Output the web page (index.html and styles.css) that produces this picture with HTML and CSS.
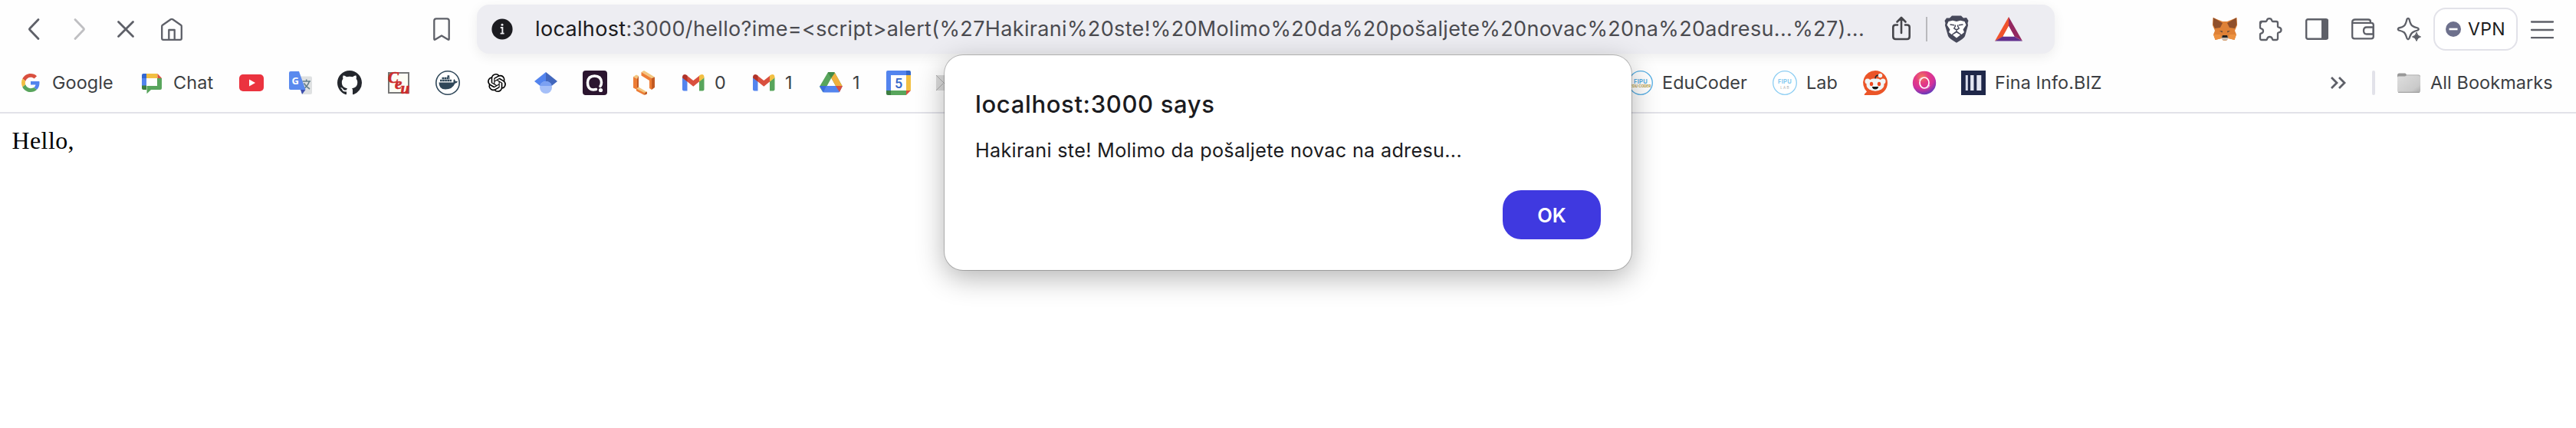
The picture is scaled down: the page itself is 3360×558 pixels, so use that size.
FILE: index.html
```html
<!DOCTYPE html>
<html lang="en">
<head>
<meta charset="utf-8">
<title>localhost:3000/hello</title>
<link rel="stylesheet" href="styles.css">
</head>
<body>
<header class="chrome">
  <div class="toolbar">
    <nav class="nav">
      <svg class="ic line" viewBox="0 0 32 32"><path d="M22 3.500 L11 15Q10 16 11 17L22 28.500"/></svg>
      <svg class="ic line faded" viewBox="0 0 32 32"><path d="M10 3.500 L21 15Q22 16 21 17L10 28.500"/></svg>
      <svg class="ic line" viewBox="0 0 32 32"><path d="M6.500 6.500L25.500 25.500M25.500 6.500L6.500 25.500"/></svg>
      <svg class="ic line thin" viewBox="0 0 32 32"><path d="M3.200 12.500Q3 11.500 4 10.700L14.700 3.300Q16 2.500 17.300 3.300L28 10.700Q29 11.500 28.800 12.500V28Q28.800 29.800 27 29.800H5Q3.200 29.800 3.200 28ZM12.300 29.500V17H19.700V29.500"/></svg>
    </nav>
    <svg class="ic line thin mark" viewBox="0 0 32 32"><path d="M6.300 28.800V5Q6.300 2.300 9 2.300H23Q25.700 2.300 25.700 5V28.800Q25.700 30.300 24.300 29.500L16 24.500L7.700 29.500Q6.300 30.300 6.300 28.800Z"/></svg>
    <div class="address">
      <svg class="info" viewBox="0 0 28 28"><circle cx="14" cy="14" r="13.600" fill="#1b1b20"/><circle cx="14" cy="8.200" r="1.500" fill="#ededf2"/><path d="M11.800 12h2.600v7.500M11.600 19.600h5" stroke="#ededf2" stroke-width="1.900" fill="none"/></svg>
      <div class="url"><span class="host">localhost</span>:3000/hello?ime=&lt;script&gt;alert(%27Hakirani%20ste!%20Molimo%20da%20pošaljete%20novac%20na%20adresu...%27)...</div>
      <svg class="ic share" viewBox="0 0 32 32"><path d="M11 10.500H8.500Q5.300 10.500 5.300 13.500V25.500Q5.300 29 8.500 29H23.500Q26.700 29 26.700 25.500V13.500Q26.700 10.500 23.500 10.500H21M16 21V1.500M10.500 6.500L16 1L21.500 6.500"/></svg>
      <span class="sep"></span>
      <svg class="lion" viewBox="0 0 32 36"><path d="M10 0.500H22L25 3.500L29 3L31.500 7L30.500 10L31 13L27 27Q26 30 16 35.700Q6 30 5 27L1 13L1.500 10L.500 7L3 3.500L7 3.500Z" fill="#46485a"/><path d="M5.500 8L11 6.800L16 8L21 6.800L26.500 8L28.500 12.500L24.500 18.500L26 22L22.500 25L18 21.500L16 20.500L14 21.500L9.500 25L6 22L7.500 18.500L3.500 12.500Z" fill="#fff"/><path d="M16 22.500L21 25.500L16 29.500L11 25.500Z" fill="#fff"/><path d="M7.500 12L13 12.800M24.500 12L19 12.800M14 12.500L14.500 14L12.800 17L16 19L19.200 17L17.500 14L18 12.500M16 19V22" fill="none" stroke="#46485a" stroke-width="1.500"/></svg>
      <svg class="bat" viewBox="0 0 36 32"><path d="M18 0V12L10.500 26L0 31.500Z" fill="#f0532d"/><path d="M18 0L36 31.500L25.500 25.500L18 12Z" fill="#942860"/><path d="M0 31.500L10.500 25.500H25.500L36 31.500Z" fill="#62308e"/><path d="M18 12L25.500 25.500H10.500Z" fill="#fff"/></svg>
    </div>
    <div class="extensions">
      <svg class="ic" viewBox="0 0 32 32"><path d="M.500 1L13 6H19L31.500 1L32 11L29 18L31 23L28.500 30L20.500 28L18 31H14L11.500 28L3.500 30L1 23L3 18L0 11Z" fill="#df8136"/><path d="M1 1L13 8L10 14L3 15L.500 10ZM31 1L19 8L22 14L29 15L31.500 10Z" fill="#8f4f2b"/><path d="M9 18L13 18.500L12.500 20.500ZM23 18L19 18.500L19.500 20.500Z" fill="#56453d"/><path d="M1 23H10L11.500 28L3.500 30ZM31 23H22L20.500 28L28.500 30Z" fill="#ec9140"/><path d="M12 25H20L20.500 28L18 30.500H14L11.500 28Z" fill="#c9beb3"/><path d="M13 24H19L20 27H12Z" fill="#25211e"/></svg>
      <svg class="ic line thin" viewBox="0 0 32 32"><path d="M3 8Q3 6 5 6H9.500Q10.500 6 10.700 4.800Q11.300 2.200 14 2.200T17.300 4.800Q17.500 6 18.500 6H23Q25 6 25 8V12.500Q25 13.500 26.200 13.700Q29.500 14.200 29.500 17T26.200 20.300Q25 20.500 25 21.500V28Q25 30 23 30H19Q18.200 30 18 29Q17.300 26 14.500 26T11 29Q10.800 30 10 30H4Q2 30 2 28V23Q2 22 3 21.700Q6 21 6 18.500T3 15.200Q2 15 2 14V8Q2 6 4 6"/></svg>
      <svg class="ic" viewBox="0 0 32 32"><rect x="2.200" y="3.200" width="27.600" height="25.600" rx="2" fill="none" stroke="#5e6068" stroke-width="2.400"/><path d="M22 3H29Q31 3 31 5V27Q31 29 29 29H22Z" fill="#5e6068"/></svg>
      <svg class="ic line thin" viewBox="0 0 32 32"><path d="M2.200 7Q2.200 3.500 6 3.500H23Q26 3.500 26 6.500V8M2.200 7.800H27Q29.800 7.800 29.800 10.500V25.500Q29.800 28.300 27 28.300H5Q2.200 28.300 2.200 25.500V6.500M29.500 13.500H21Q17 13.500 17 18T21 22.500H29.500V13.500"/></svg>
      <svg class="ic line thin" viewBox="0 0 32 32"><path d="M13.500 3Q15 .800 16.500 3Q18 10.500 21 12Q23 13.500 27.500 14.500Q30 16 27.500 17.500Q23 18.500 20.500 20.500Q18.500 22 16.500 28Q15 30.500 13.500 28Q11.500 21.500 9.500 20Q7 18.500 2.800 17.500Q.800 16 2.800 14.500Q8 13.500 10 11.500Q12 9.500 13.500 3Z"/><path d="M26 20.500Q27 25 31.500 26Q27 27 26 31.500Q25 27 20.500 26Q25 25 26 20.500Z" fill="#5e6068" stroke-width="1"/></svg>
    </div>
    <button class="vpn"><svg viewBox="0 0 20 20"><circle cx="10" cy="10" r="10" fill="#6d708c"/><path d="M4.500 10H15.500" stroke="#fff" stroke-width="2.600"/></svg><span>VPN</span></button>
    <svg class="ic line thin menu" viewBox="0 0 32 32"><path d="M2 6.500H30M2 17H30M2 27.200H30"/></svg>
  </div>

  <div class="bookmarks">
    <div class="bm"><svg class="ic" viewBox="0 0 32 32"><g transform="translate(4 4) scale(.5)"><path fill="#d9503f" d="M24 9.500c3.540 0 6.710 1.220 9.210 3.600l6.850-6.850C35.900 2.380 30.470 0 24 0 14.620 0 6.510 5.380 2.560 13.220l7.980 6.190C12.430 13.720 17.740 9.500 24 9.500z"/><path fill="#5384ee" d="M46.980 24.550c0-1.570-.15-3.090-.38-4.550H24v9.020h12.940c-.58 2.960-2.260 5.480-4.780 7.180l7.730 6c4.510-4.180 7.090-10.360 7.090-17.650z"/><path fill="#f2bf42" d="M10.530 28.590c-.48-1.450-.76-2.990-.76-4.590s.27-3.140.76-4.590l-7.980-6.190C.92 16.460 0 20.120 0 24c0 3.880.92 7.540 2.560 10.780l7.970-6.190z"/><path fill="#58a55c" d="M24 48c6.480 0 11.930-2.130 15.890-5.810l-7.730-6c-2.150 1.450-4.920 2.300-8.160 2.300-6.260 0-11.570-4.220-13.470-9.910l-7.980 6.190C6.510 42.620 14.620 48 24 48z"/></g></svg><span class="lb google">Google</span></div>
    <div class="bm"><svg class="ic" viewBox="0 0 32 32"><path d="M3 10H9V20H3Z" fill="#5384ee"/><path d="M5 4H9V10H3V6Q3 4 5 4Z" fill="#3467d0"/><path d="M9 4H23.500V10H9Z" fill="#f2bf42"/><path d="M23.500 4L29 10H23.500Z" fill="#d9503f"/><path d="M23 10H29V23Q29 25 27 25H15L9.500 30.200V20H23Z" fill="#58a55c"/><path d="M3 19.500H9V25H5Q3 25 3 23Z" fill="#3d7e41"/></svg><span class="lb chat">Chat</span></div>
    <svg class="ic" viewBox="0 0 32 32"><rect y="5" width="32" height="22" rx="5" fill="#eb333f"/><path d="M13 11.500L21 16L13 20.500Z" fill="#fff"/></svg>
    <svg class="ic" viewBox="0 0 32 32"><path d="M14 7.500H29Q31 7.500 31 9.500V29Q31 31 29 31H18.500Z" fill="#dfe1e2"/><path d="M18.500 14H29M23.700 11.500V14M27.500 14Q25 21 19 24.500M20.500 16.500Q23 21 28 24" fill="none" stroke="#647f8b" stroke-width="1.600"/><path d="M16 25H22.500L18 31Z" fill="#3d4fae"/><path d="M3 1H14L22.500 25H3Q1 25 1 23V3Q1 1 3 1Z" fill="#5a8aee"/><text x="4.500" y="17.500" class="gt">G</text></svg>
    <svg class="ic" viewBox="0 0 16 16"><path fill="#24272d" d="M8 0C3.580 0 0 3.580 0 8c0 3.540 2.290 6.530 5.470 7.590.4.070.55-.17.55-.38 0-.19-.01-.82-.01-1.490-2.010.37-2.530-.49-2.690-.94-.09-.23-.48-.94-.82-1.130-.28-.15-.68-.52-.01-.53.63-.01 1.080.58 1.230.82.72 1.210 1.870.87 2.330.66.070-.52.280-.87.510-1.070-1.780-.2-3.640-.89-3.640-3.950 0-.87.310-1.590.82-2.150-.08-.2-.36-1.020.080-2.120 0 0 .67-.21 2.200.82.640-.18 1.320-.27 2-.27.680 0 1.360.090 2 .27 1.530-1.040 2.200-.82 2.200-.82.440 1.100.160 1.920.080 2.120.510.560.820 1.270.820 2.150 0 3.070-1.870 3.750-3.650 3.950.290.250.540.730.540 1.480 0 1.070-.01 1.930-.01 2.200 0 .21.150.46.550.38A8.013 8.013 0 0016 8c0-4.420-3.580-8-8-8z"/></svg>
    <svg class="ic" viewBox="0 0 32 32"><rect x="3" y="3" width="26" height="26" fill="#fdfdf5" stroke="#777" stroke-width="2"/><g class="ceu"><text x="2" y="16">C</text><text x="11" y="24">e</text><text x="18.500" y="29.500">u</text></g></svg>
    <svg class="ic" viewBox="0 0 32 32"><circle cx="16" cy="16" r="15.200" fill="#fff" stroke="#2f4759" stroke-width="1.600"/><path d="M4.500 15.500H23.500Q23 12.500 24.200 11Q26 12.500 26 14Q28 13.500 29 14.500Q28 16.500 25.500 16.700Q22 24.500 13 24.500Q4.500 24.500 4.500 15.500Z" fill="#2f4759"/><path d="M6 13H21M8.500 10H18.500M15.500 7.500H18.500" stroke="#2f4759" stroke-width="2.500" stroke-dasharray="2.700 .400"/></svg>
    <svg class="ic" viewBox="0 0 32 32"><path transform="translate(4 4)" d="M22.2819 9.8211a5.9847 5.9847 0 0 0-.5157-4.9108 6.0462 6.0462 0 0 0-6.5098-2.9A6.0651 6.0651 0 0 0 4.9807 4.1818a5.9847 5.9847 0 0 0-3.9977 2.9 6.0462 6.0462 0 0 0 .7427 7.0966 5.98 5.98 0 0 0 .511 4.9107 6.051 6.051 0 0 0 6.5146 2.9001A5.9847 5.9847 0 0 0 13.2599 24a6.0557 6.0557 0 0 0 5.7718-4.2058 5.9894 5.9894 0 0 0 3.9977-2.9001 6.0557 6.0557 0 0 0-.7475-7.0729zm-9.022 12.6081a4.4755 4.4755 0 0 1-2.8764-1.0408l.1419-.0804 4.7783-2.7582a.7948.7948 0 0 0 .3927-.6813v-6.7369l2.02 1.1686a.071.071 0 0 1 .038.052v5.5826a4.504 4.504 0 0 1-4.4945 4.4944zm-9.6607-4.1254a4.4708 4.4708 0 0 1-.5346-3.0137l.142.0852 4.783 2.7582a.7712.7712 0 0 0 .7806 0l5.8428-3.3685v2.3324a.0804.0804 0 0 1-.0332.0615L9.74 19.9502a4.4992 4.4992 0 0 1-6.1408-1.6464zM2.3408 7.8956a4.485 4.485 0 0 1 2.3655-1.9728V11.6a.7664.7664 0 0 0 .3879.6765l5.8144 3.3543-2.0201 1.1685a.0757.0757 0 0 1-.071 0l-4.8303-2.7865A4.504 4.504 0 0 1 2.3408 7.872zm16.5963 3.8558L13.1038 8.364 15.1192 7.2a.0757.0757 0 0 1 .071 0l4.8303 2.7913a4.4944 4.4944 0 0 1-.6765 8.1042v-5.6772a.79.79 0 0 0-.407-.667zm2.0107-3.0231l-.142-.0852-4.7735-2.7818a.7759.7759 0 0 0-.7854 0L9.409 9.2297V6.8974a.0662.0662 0 0 1 .0284-.0615l4.8303-2.7866a4.4992 4.4992 0 0 1 6.6802 4.66zM8.3065 12.863l-2.02-1.1638a.0804.0804 0 0 1-.038-.0567V6.0742a4.4992 4.4992 0 0 1 7.3757-3.4537l-.142.0805L8.704 5.459a.7948.7948 0 0 0-.3927.6813zm1.0976-2.3654l2.602-1.4998 2.6069 1.4998v2.9994l-2.5974 1.4997-2.6067-1.4997Z"/></svg>
    <svg class="ic" viewBox="0 0 32 32"><path d="M16 2V14L8.500 20L1 14Z" fill="#5384ee"/><path d="M16 2L31 14L23.500 20L16 14Z" fill="#4267bd"/><circle cx="16" cy="22" r="8" fill="#a5bff8"/><path d="M8.300 20Q9.500 14 16 14T23.700 20Z" fill="#7ba0f2"/></svg>
    <svg class="ic" viewBox="0 0 32 32"><rect width="32" height="32" rx="4" fill="#2b152f"/><path d="M17.500 24.500Q6.500 27 6.500 15.500Q7 7 15.500 7T24.500 15.500Q24.500 18.500 23 20.500" fill="none" stroke="#fff" stroke-width="3.500" stroke-linecap="round"/><circle cx="23.500" cy="25.500" r="2.600" fill="#fff"/></svg>
    <svg class="ic" viewBox="0 0 32 32"><path d="M2 8L7 10.500V25L2 22.500Z" fill="#ed7d35"/><path d="M2 8L6 5.500L9 7L7 10.500Z" fill="#f3c67f"/><path d="M7 10.500L9 7V23L7 25Z" fill="#c25a22"/><path d="M12.500 2L16 0L30 8.500L26 10Z" fill="#f3c67f"/><path d="M12.500 2L26 10V25L23 23V13L12.500 6.500Z" fill="#ed7d35"/><path d="M26 10L30 8.500V22L26 25Z" fill="#c25a22"/><path d="M6 23.500L9 21.500L20 28L16.500 30Z" fill="#f3c67f"/><path d="M6 23.500L16.500 29V32L6 26.500Z" fill="#ed7d35"/><path d="M16.500 29L20 27.500V30.500L16.500 32Z" fill="#c25a22"/></svg>
    <div class="bm"><svg class="ic" viewBox="0 0 32 32"><use href="#gmail"/></svg><span class="lb zero">0</span></div>
    <div class="bm"><svg class="ic" viewBox="0 0 32 32"><g id="gmail"><path d="M2 9L8.500 14V26.500H4Q2 26.500 2 24.500Z" fill="#5384ee"/><path d="M24 14L30.500 9V24.500Q30.500 26.500 28.500 26.500H24Z" fill="#58a55c"/><path d="M8 6.500L16.300 13L24.500 6.500V14L16.300 20.700L8 14Z" fill="#d9503f"/><path d="M2 9Q2 5 5.500 5Q7 5 8.500 6.500V14.500L2 9.500Z" fill="#b03329"/><path d="M30.500 9Q30.500 5 27.500 5Q25.500 5 24 6.500V14.500L30.500 9.500Z" fill="#f2bf42"/></g></svg><span class="lb one">1</span></div>
    <div class="bm"><svg class="ic" viewBox="0 0 32 32"><path d="M11.500 3Q12 2 13.500 2H19Q20.500 2 21 3L30.500 20H22L16.300 9.800L8.500 24L5.500 28.500L1.500 22Q1 21 1.500 20Z" fill="#58a55c"/><path d="M11.700 2.500Q12 2 13 2H19Q20.500 2 21 3L16.300 10Z" fill="#438a47"/><path d="M21 3L30.500 20H22L16.300 9.800Z" fill="#f0b03d"/><path d="M1 20H31L27.500 27Q27 28.500 25.500 28.500H7Q5.500 28.500 5 27.500Z" fill="#5384ee"/><path d="M1 20H10L6 28Z" fill="#3c6ddc"/><path d="M22 20H31L27 28Z" fill="#d9503f"/></svg><span class="lb one">1</span></div>
    <svg class="ic" viewBox="0 0 32 32"><path d="M2 0H26V6H6V26H0V2Q0 0 2 0Z" fill="#5384ee"/><path d="M26 0H30Q32 0 32 2V6H26Z" fill="#3467c8"/><path d="M26 6H32V26H26Z" fill="#f2bf42"/><path d="M6 26H26V32H6Z" fill="#58a55c"/><path d="M0 26H6V32H2Q0 32 0 30Z" fill="#3d7e41"/><path d="M26 26H32L26 32Z" fill="#d9503f"/><path d="M6 6H26V26H6Z" fill="#fff"/><text x="16" y="22.500" class="day">5</text></svg>
    <svg class="ic" viewBox="0 0 32 32"><rect x="1" y="6" width="30" height="20" fill="#dcdcdc"/><path d="M1 6L12 17M1 26L10 17" fill="none" stroke="#adadad" stroke-width="1"/></svg>
    <div class="bm edu"><svg class="ic" viewBox="0 0 32 32"><circle cx="16" cy="16" r="15.300" fill="#fff" stroke="#55aee4" stroke-width="1.300"/><text x="16" y="16.800" class="fipu">FIPU</text><text x="16" y="22" class="sub coder">EDU CODER</text></svg><span class="lb educoder">EduCoder</span></div>
    <div class="bm"><svg class="ic" viewBox="0 0 32 32"><circle cx="16" cy="16" r="15.300" fill="#fff" stroke="#8dcef3" stroke-width="1.300"/><text x="16" y="17" class="fipu pale">FIPU</text><text x="16.500" y="24" class="sub lab">LAB</text></svg><span class="lb labtext">Lab</span></div>
    <svg class="ic" viewBox="0 0 32 32"><path d="M16 0A16 16 0 0 1 16 32H2.500Q1 32 2 30.500L5 27.500A16 16 0 0 1 16 0Z" fill="#eb5528"/><circle cx="6" cy="14" r="3.500" fill="#f1f5f6"/><circle cx="26" cy="14" r="3.500" fill="#f1f5f6"/><ellipse cx="16" cy="18.500" rx="11.500" ry="8.300" fill="#f1f5f6"/><path d="M16 10.500Q16 6 21 6" fill="none" stroke="#202b30" stroke-width="1.500"/><circle cx="22.500" cy="6.500" r="2.700" fill="#f1f5f6"/><ellipse cx="11" cy="17.500" rx="2.200" ry="2.700" fill="#ef4a22"/><ellipse cx="21" cy="17.500" rx="2.200" ry="2.700" fill="#ef4a22"/><path d="M11.800 21H20.200Q19.500 24.500 16 24.500T11.800 21Z" fill="#101416"/></svg>
    <svg class="ic" viewBox="0 0 32 32"><defs><radialGradient id="pink" cx=".4" cy=".25" r=".8"><stop offset="0" stop-color="#ee7a5b"/><stop offset=".35" stop-color="#e53b83"/><stop offset=".65" stop-color="#d3309c"/><stop offset="1" stop-color="#503cc0"/></radialGradient></defs><circle cx="16" cy="16" r="15.200" fill="url(#pink)"/><ellipse cx="16" cy="16" rx="6" ry="7" fill="none" stroke="#fff" stroke-width="1.700"/><path d="M9 13Q9.500 10 13 9M23 19Q22.500 22 19 23" fill="none" stroke="#f9b9d6" stroke-width="1"/></svg>
    <div class="bm"><svg class="ic" viewBox="0 0 32 32"><rect width="32" height="32" fill="#1f2749"/><path d="M7.300 6V26" stroke="#d9dceb" stroke-width="3"/><path d="M14.300 6V26" stroke="#e3e5f1" stroke-width="4.400"/><path d="M23.300 6V26" stroke="#e3e5f1" stroke-width="6"/></svg><span class="lb fina">Fina Info.BIZ</span></div>
    <div class="overflow">
      <svg class="ic chev" viewBox="0 0 32 32"><path d="M7 9L14 16L7 23M17 9L24 16L17 23"/></svg>
      <span class="divider"></span>
      <svg class="ic" viewBox="0 0 32 32"><defs><linearGradient id="fold" x2="1" y2="1"><stop stop-color="#dedede"/><stop offset=".75" stop-color="#cacaca"/><stop offset="1" stop-color="#aaa"/></linearGradient></defs><path d="M1 6Q1 3.500 3.500 3.500H11Q12 3.500 13 5.500H29Q31 5.500 31 8V12H1Z" fill="#999"/><path d="M1 9Q1 7.500 2.500 7.500H11L13 6.200H28.500Q31 6.200 31 8.500V26Q31 29 28 29H4Q1 29 1 26Z" fill="url(#fold)"/><path d="M2 28.300H30" stroke="#999" stroke-width="1"/></svg>
      <span class="lb all">All Bookmarks</span>
    </div>
  </div>
</header>

<main class="page">Hello,</main>

<section class="dialog" role="alertdialog">
  <h1 class="title">localhost:3000 says</h1>
  <p class="message">Hakirani ste! Molimo da pošaljete novac na adresu...</p>
  <button class="ok">OK</button>
</section>
</body>
</html>
```
FILE: styles.css
```css
* { box-sizing: border-box; }

body {
  margin: 0;
  height: 558px;
  overflow: hidden;
  position: relative;
  background: #fff;
  font-family: Inter, "Liberation Sans", sans-serif;
}

svg { display: block; flex: none; overflow: visible; }
button { margin: 0; padding: 0; font-family: inherit; }

.chrome { height: 148px; border-bottom: 2px solid #e2e2e9; background: #fefefe; }

.toolbar { display: flex; align-items: center; height: 76px; padding-left: 28px; }
.nav, .extensions { display: flex; gap: 28px; }
.extensions { margin-left: 206px; }

.ic { width: 32px; height: 32px; }
.line { fill: none; stroke: #5e6068; stroke-width: 2.8; stroke-linecap: round; stroke-linejoin: round; }
.thin { stroke-width: 2.3; }
.faded { stroke: #bfbfc2; }
.mark { margin-left: 320px; }

.address {
  display: flex;
  align-items: center;
  flex: none;
  width: 2058px;
  height: 64px;
  margin-left: 30px;
  padding-left: 19px;
  border-radius: 16px;
  background: #ededf2;
  box-shadow: 0 4px 16px rgba(0, 0, 0, .07);
}
.info { width: 28px; height: 28px; }
.url { width: 1765px; margin-left: 29px; font-size: 27px; line-height: 40px; letter-spacing: .35px; white-space: nowrap; color: #4b4b50; }
.host { color: #1b1b20; }
.share { margin-left: 1px; fill: none; stroke: #46464b; stroke-width: 2.6; stroke-linecap: round; stroke-linejoin: round; }
.sep { width: 2px; height: 32px; margin-left: 16px; background: #b9b9bd; }
.lion { width: 32px; height: 36px; margin-left: 22px; }
.bat { width: 36px; height: 32px; margin-left: 34px; }

.vpn {
  display: flex;
  align-items: center;
  width: 110px;
  height: 56px;
  margin-left: 16px;
  padding-left: 14px;
  gap: 9px;
  border: 2px solid #e2e2e9;
  border-radius: 16px;
  background: #fff;
  color: #1b1b20;
  font-size: 23px;
  font-weight: 400;
  letter-spacing: .3px;
}
.vpn svg { width: 20px; height: 20px; }
.menu { margin-left: 16px; }

.bookmarks { display: flex; align-items: center; gap: 32px; height: 64px; padding-left: 24px; }
.bm { display: flex; align-items: center; gap: 12px; }
.lb { font-size: 23.4px; line-height: 32px; letter-spacing: .12px; white-space: nowrap; color: #3c3e42; }
.google { width: 82px; }
.chat { width: 54px; }
.zero { width: 16px; }
.one { width: 12px; }
.edu { margin-left: 840px; }
.educoder { width: 112px; }
.labtext { width: 42px; }
.fina { width: 142px; }

.gt { font: 700 13px "Open Sans", sans-serif; fill: #fff; }
.ceu { font: italic 700 21px "Liberation Serif", serif; fill: #cc2b2b; stroke: #cc2b2b; stroke-width: .6; }
.day { font: 500 18px Roboto, sans-serif; fill: #3467c8; text-anchor: middle; }
.fipu { font: 700 7.5px Inter, sans-serif; letter-spacing: .3px; fill: #55aee4; text-anchor: middle; }
.pale { fill: #84caf0; }
.sub { font: 700 4.6px Inter, sans-serif; text-anchor: middle; }
.coder { fill: #b69a40; }
.lab { fill: #aaa; letter-spacing: 1.2px; font-weight: 400; }

.overflow { display: flex; align-items: center; margin-left: 258px; }
.chev { fill: none; stroke: #5e6068; stroke-width: 2.8; }
.divider { width: 4px; height: 32px; margin: 0 28px; border-radius: 2px; background: #e2e2e9; }
.all { margin-left: 12px; }

.page { padding: 17px 15.5px; font: 32px/36px "Liberation Serif", serif; letter-spacing: .4px; color: #000; }

.dialog {
  position: absolute;
  left: 1232px;
  top: 72px;
  display: flex;
  flex-direction: column;
  width: 896px;
  height: 280px;
  padding: 44px 40px 40px;
  border-radius: 24px;
  background: #fff;
  box-shadow: 0 0 0 1px rgba(0, 0, 0, .22), 0 10px 36px rgba(0, 0, 0, .3);
}
.title { margin: 0; font-size: 31px; line-height: 40px; font-weight: 500; letter-spacing: .65px; color: #1b1b20; }
.message { margin: 20px 0 0; font-size: 25.2px; line-height: 40px; letter-spacing: .31px; white-space: nowrap; color: #1b1b20; }
.ok { align-self: flex-end; width: 128px; height: 64px; margin-top: 32px; border: 0; border-radius: 24px; background: #3f39e0; color: #fff; font-size: 25.5px; font-weight: 600; }
```
